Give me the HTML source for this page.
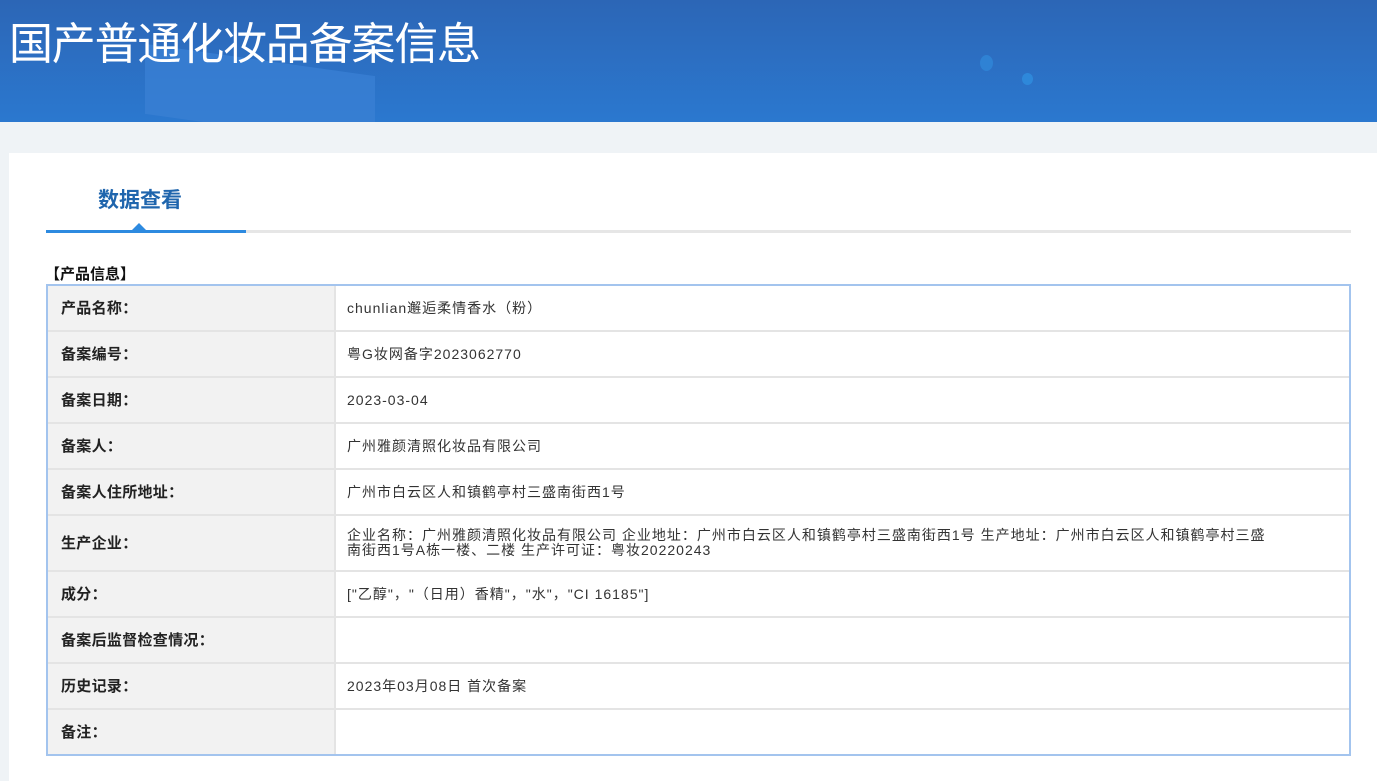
<!DOCTYPE html>
<html><head><meta charset="utf-8"><style>
*{margin:0;padding:0;box-sizing:border-box}
body{width:1377px;height:781px;overflow:hidden;background:#eff3f6;font-family:"Liberation Sans","Noto Sans CJK SC",sans-serif}
.hdr{position:absolute;left:0;top:0;width:1377px;height:122px;background:linear-gradient(180deg,#2c66b6 0%,#2b78cf 100%);overflow:hidden}
.hdr .b1{position:absolute;left:145px;top:60px;width:230px;height:70px;background:#3a7fd3;transform:skewY(8deg);opacity:.8}
.hdr .b2{position:absolute;left:980px;top:55px;width:13px;height:16px;border-radius:50%;background:#2f82d4}
.hdr .b3{position:absolute;left:1022px;top:73px;width:11px;height:12px;border-radius:50%;background:#2e88da}
.hdr h1{position:absolute;left:9px;top:8px;font-size:44px;color:#fff;font-weight:normal;letter-spacing:-1.2px;font-family:"Liberation Sans","Noto Sans CJK SC",sans-serif}
.card{position:absolute;left:9px;top:153px;width:1368px;height:628px;background:#fff}
.tab{position:absolute;left:98px;top:184px;font-size:21px;font-weight:bold;color:#1f65ad}
.line{position:absolute;left:46px;top:230px;width:1305px;height:3px;background:#e6e6e6}
.line2{position:absolute;left:46px;top:230px;width:200px;height:3px;background:#2d8ae0}
.tri{position:absolute;left:132px;top:223px;width:0;height:0;border-left:7px solid transparent;border-right:7px solid transparent;border-bottom:7px solid #2d8ae0}
.sec{position:absolute;left:45px;top:263px;font-size:15px;font-weight:bold;color:#111}
.wrap{position:absolute;left:46px;top:284px;width:1305px;border:2px solid #a3c4ee;overflow:hidden}
table{width:1305px;margin:-2px 0 -2px -2px;border-collapse:collapse}
td{border:2px solid #e4e4e4;height:46px;font-size:14px;color:#333;padding:0 11px;vertical-align:middle;line-height:15px;letter-spacing:1px}
td.l{width:288px;background:#f2f2f2;font-weight:bold;font-size:15px;color:#222;padding-left:13px;letter-spacing:0.3px}
</style></head><body>
<div class="hdr"><div class="b1"></div><div class="b2"></div><div class="b3"></div><h1>国产普通化妆品备案信息</h1></div>
<div class="card"></div>
<div class="tab">数据查看</div>
<div class="line"></div><div class="line2"></div><div class="tri"></div>
<div class="sec">【产品信息】</div>
<div class="wrap">
<table>
<tr><td class="l">产品名称：</td><td>chunlian邂逅柔情香水（粉）</td></tr>
<tr><td class="l">备案编号：</td><td>粤G妆网备字2023062770</td></tr>
<tr><td class="l">备案日期：</td><td>2023-03-04</td></tr>
<tr><td class="l">备案人：</td><td>广州雅颜清照化妆品有限公司</td></tr>
<tr><td class="l">备案人住所地址：</td><td>广州市白云区人和镇鹤亭村三盛南街西1号</td></tr>
<tr><td class="l" style="height:56px">生产企业：</td><td>企业名称：广州雅颜清照化妆品有限公司 企业地址：广州市白云区人和镇鹤亭村三盛南街西1号 生产地址：广州市白云区人和镇鹤亭村三盛<br>南街西1号A栋一楼、二楼 生产许可证：粤妆20220243</td></tr>
<tr><td class="l">成分：</td><td>["乙醇"，"（日用）香精"，"水"，"CI 16185"]</td></tr>
<tr><td class="l">备案后监督检查情况：</td><td></td></tr>
<tr><td class="l">历史记录：</td><td>2023年03月08日 首次备案</td></tr>
<tr><td class="l">备注：</td><td></td></tr>
</table>
</div>
</body></html>
